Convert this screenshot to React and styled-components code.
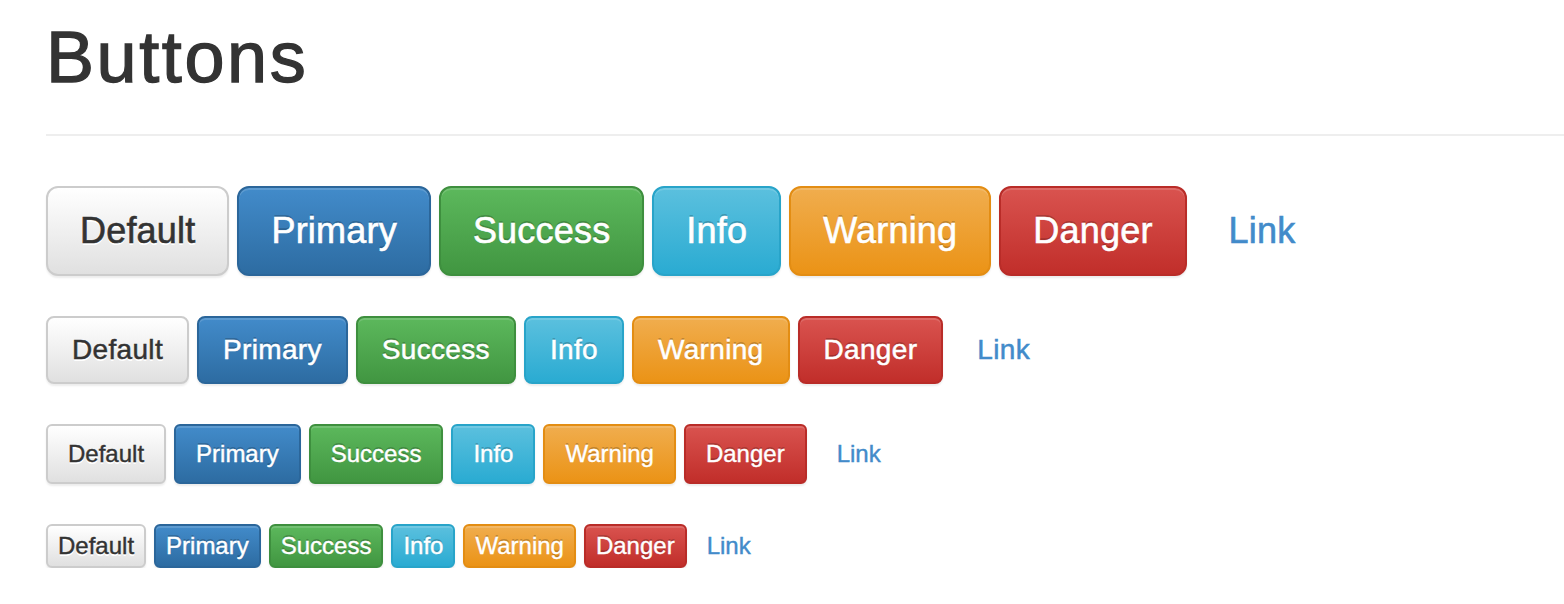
import React from "react";
import styled, { createGlobalStyle, css } from "styled-components";

const Global = createGlobalStyle`
  html, body { margin: 0; padding: 0; background: #fff; }
  body {
    font-family: "Liberation Sans", Arial, Helvetica, sans-serif;
    color: #333;
  }
  * { box-sizing: border-box; }
`;

const Page = styled.div`
  padding: 18px 0 0 46px;
  overflow: hidden;
  width: 1564px;
`;

const Header = styled.div`
  border-bottom: 2px solid #eee;
  padding-bottom: 37px;
  margin-bottom: 50px;
`;

const Title = styled.h1`
  margin: 0;
  font-size: 72px;
  line-height: 79px;
  font-weight: 400;
  letter-spacing: 2.6px;
  -webkit-text-stroke: 1.3px #333;
  color: #333;
`;

const Rows = styled.div`
  display: flex;
  flex-direction: column;
  gap: 40px;
`;

const Row = styled.div`
  display: flex;
  align-items: center;
  gap: 8px;
`;

const sizes = {
  lg: css`
    font-size: 36px;
    line-height: 46px;
    padding: 20px 32px;
    border-radius: 12px;
    letter-spacing: 0.2px;
    -webkit-text-stroke-width: 0.6px;
  `,
  md: css`
    font-size: 28px;
    line-height: 40px;
    padding: 12px 24px;
    border-radius: 8px;
    letter-spacing: 0.33px;
    -webkit-text-stroke-width: 0.5px;
  `,
  sm: css`
    font-size: 24px;
    line-height: 36px;
    padding: 10px 20px;
    border-radius: 6px;
    -webkit-text-stroke-width: 0.4px;
  `,
  xs: css`
    font-size: 24px;
    line-height: 36px;
    padding: 2px 10px;
    border-radius: 6px;
    -webkit-text-stroke-width: 0.4px;
  `,
};

const variants = {
  default: { from: "#ffffff", to: "#e0e0e0", border: "#cccccc", color: "#333", shadow: "0 2px 0 #fff" },
  primary: { from: "#428bca", to: "#2d6ca2", border: "#2b669a", color: "#fff", shadow: "0 -2px 0 rgba(0,0,0,0.2)" },
  success: { from: "#5cb85c", to: "#419641", border: "#3e8f3e", color: "#fff", shadow: "0 -2px 0 rgba(0,0,0,0.2)" },
  info: { from: "#5bc0de", to: "#2aabd2", border: "#28a4c9", color: "#fff", shadow: "0 -2px 0 rgba(0,0,0,0.2)" },
  warning: { from: "#f0ad4e", to: "#eb9316", border: "#e38d13", color: "#fff", shadow: "0 -2px 0 rgba(0,0,0,0.2)" },
  danger: { from: "#d9534f", to: "#c12e2a", border: "#b92c28", color: "#fff", shadow: "0 -2px 0 rgba(0,0,0,0.2)" },
};

const Button = styled.button`
  display: inline-block;
  font-family: "Liberation Sans", Arial, Helvetica, sans-serif;
  font-weight: 400;
  text-align: center;
  white-space: nowrap;
  cursor: pointer;
  border: 2px solid ${(p) => variants[p.$variant].border};
  color: ${(p) => variants[p.$variant].color};
  -webkit-text-stroke-color: ${(p) => variants[p.$variant].color};
  background-image: linear-gradient(
    to bottom,
    ${(p) => variants[p.$variant].from} 0%,
    ${(p) => variants[p.$variant].to} 100%
  );
  text-shadow: ${(p) => variants[p.$variant].shadow};
  box-shadow: inset 0 2px 0 rgba(255, 255, 255, 0.15), 0 2px 2px rgba(0, 0, 0, 0.075);
  ${(p) => sizes[p.$size]}
`;

const LinkButton = styled.button`
  display: inline-block;
  font-family: "Liberation Sans", Arial, Helvetica, sans-serif;
  font-weight: 400;
  white-space: nowrap;
  cursor: pointer;
  background: transparent;
  border: 2px solid transparent;
  color: #428bca;
  -webkit-text-stroke-color: #428bca;
  ${(p) => sizes[p.$size]}
`;

const labels = [
  ["default", "Default"],
  ["primary", "Primary"],
  ["success", "Success"],
  ["info", "Info"],
  ["warning", "Warning"],
  ["danger", "Danger"],
];

function ButtonRow({ size }) {
  return (
    <Row>
      {labels.map(([v, l]) => (
        <Button key={v} $variant={v} $size={size}>
          {l}
        </Button>
      ))}
      <LinkButton $size={size}>Link</LinkButton>
    </Row>
  );
}

export default function App() {
  return (
    <>
      <Global />
      <Page>
        <Header>
          <Title>Buttons</Title>
        </Header>
        <Rows>
          <ButtonRow size="lg" />
          <ButtonRow size="md" />
          <ButtonRow size="sm" />
          <ButtonRow size="xs" />
        </Rows>
      </Page>
    </>
  );
}
